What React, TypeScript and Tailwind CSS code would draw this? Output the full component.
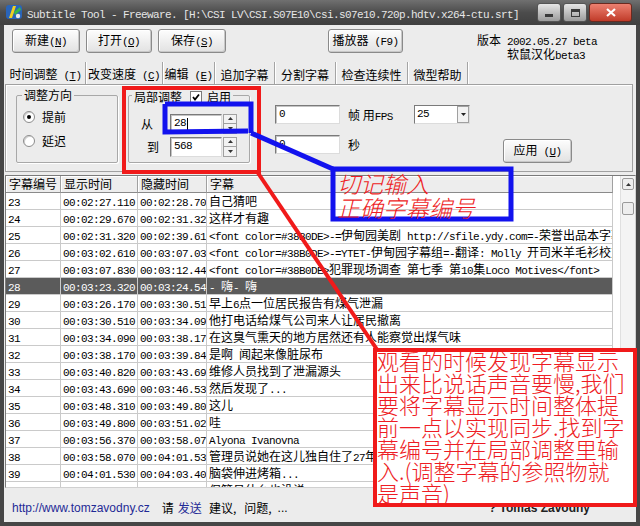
import React from "react";

const MONO = "font-['Liberation_Mono',monospace] text-[11px] tracking-[-0.6px]";

function Mixed({ text }: { text: string }) {
  const parts = text.split(/([\x00-\x7f]+)/).filter((p) => p.length > 0);
  return (
    <>
      {parts.map((p, i) =>
        /^[\x00-\x7f]+$/.test(p) ? (
          <span key={i} className="font-['Liberation_Mono',monospace] text-[11px] tracking-[-0.6px]">
            {p}
          </span>
        ) : (
          <span key={i}>{p}</span>
        )
      )}
    </>
  );
}

function Acc({ zh, k, sp }: { zh: string; k: string; sp?: boolean }) {
  return (
    <span className="whitespace-pre">
      <span>{zh}</span>
      <span className={MONO}>
        {sp ? " " : ""}(<u className="underline underline-offset-1">{k}</u>)
      </span>
    </span>
  );
}

function Btn({ className, children }: { className: string; children: React.ReactNode }) {
  return (
    <div
      className={`h-[24px] flex items-center justify-center shrink-0 border border-[#8a8a8a] rounded-[3px] bg-linear-to-b from-[#fdfdfd] to-[#e2e2e2] shadow-[inset_-1px_-1px_0_#c8c8c8,inset_1px_1px_0_#ffffff] leading-[16px] ${className}`}
    >
      {children}
    </div>
  );
}

function Radio({ checked }: { checked?: boolean }) {
  return (
    <span className="w-[12px] h-[12px] rounded-full border border-[#8c8c8c] bg-white flex items-center justify-center shrink-0 shadow-[inset_1px_1px_0_#d0d0d0]">
      {checked ? <span className="w-[4px] h-[4px] rounded-full bg-black" /> : null}
    </span>
  );
}

function Input({ className, children }: { className: string; children?: React.ReactNode }) {
  return (
    <div
      className={`bg-white border border-t-[#7a7a7a] border-l-[#7a7a7a] border-b-[#dcdcdc] border-r-[#dcdcdc] shadow-[inset_1px_1px_0_#c4c4c4] pl-[3px] flex items-center shrink-0 ${MONO} ${className}`}
    >
      {children}
    </div>
  );
}

function Spinner() {
  return (
    <div className="ml-[1px] w-[14px] h-[20px] flex flex-col shrink-0">
      <div className="h-[10px] border border-[#a0a0a0] bg-[#f2f2f2] flex items-center justify-center">
        <svg width="5" height="3" viewBox="0 0 5 3">
          <path d="M2.5 0 L5 3 L0 3 Z" fill="#333" />
        </svg>
      </div>
      <div className="h-[10px] border border-t-0 border-[#a0a0a0] bg-[#f2f2f2] flex items-center justify-center">
        <svg width="5" height="3" viewBox="0 0 5 3">
          <path d="M0 0 L5 0 L2.5 3 Z" fill="#333" />
        </svg>
      </div>
    </div>
  );
}

function TitleBar() {
  const title = "Subtitle Tool - Freeware. [H:\\CSI LV\\CSI.S07E10\\csi.s07e10.720p.hdtv.x264-ctu.srt]";
  return (
    <div className="h-[25px] shrink-0 flex items-start bg-linear-to-b from-[#707070] via-[#4c4c4c] to-[#404040] pl-[5px] pr-[8px]">
      <svg className="mt-[3px] shrink-0" width="18" height="18" viewBox="0 0 18 18">
        <rect x="1" y="2" width="16" height="14" rx="3" fill="#2a64b8" />
        <path d="M4 15 L8 3 L11 3 L7 15 Z" fill="#f0d020" />
        <path d="M9 9 L15 4 L16 7 L10 12 Z" fill="#38b848" />
        <circle cx="13" cy="13" r="2.2" fill="#e8e8e8" />
      </svg>
      <span className="ml-[4px] mt-[6px] leading-[18px] font-['Liberation_Mono',monospace] text-[11px] tracking-[-0.6px] text-[#e6e6e6] whitespace-pre">
        {title}
      </span>
      <div className="ml-auto mt-[3px] flex gap-[2px]">
        <div className="w-[24px] h-[19px] rounded-[3px] border border-[#555] bg-linear-to-b from-[#e6e6e6] to-[#9c9c9c] flex items-end justify-center pb-[4px]">
          <div className="w-[8px] h-[3px] bg-[#3a3a3a]" />
        </div>
        <div className="w-[24px] h-[19px] rounded-[3px] border border-[#555] bg-linear-to-b from-[#e6e6e6] to-[#9c9c9c] flex items-center justify-center">
          <div className="w-[9px] h-[8px] border border-[#3a3a3a] border-t-[3px]" />
        </div>
        <div className="w-[43px] h-[19px] rounded-[3px] border border-[#6a2a20] bg-linear-to-b from-[#ec8070] to-[#c03a28] flex items-center justify-center">
          <svg width="10" height="9" viewBox="0 0 10 9">
            <path d="M1 1 L9 8 M9 1 L1 8" stroke="#fff" strokeWidth="2.2" />
          </svg>
        </div>
      </div>
    </div>
  );
}

function Toolbar() {
  return (
    <div className="h-[37px] shrink-0 flex items-start pl-[8px] pt-[4px]">
      <Btn className="w-[68px]">
        <Acc zh="新建" k="N" />
      </Btn>
      <Btn className="w-[66px] ml-[6px]">
        <Acc zh="打开" k="O" />
      </Btn>
      <Btn className="w-[68px] ml-[6px]">
        <Acc zh="保存" k="S" />
      </Btn>
      <Btn className="w-[75px] ml-[102px]">
        <span className="whitespace-pre">
          播放器<span className={MONO}> (F9)</span>
        </span>
      </Btn>
      <div className="ml-[74px] mt-[5px] leading-[12px] whitespace-pre">
        <div>
          版本<span className={MONO}> 2002.05.27 beta</span>
        </div>
        <div className="pl-[30px]">
          软鼠汉化<span className={MONO}>beta3</span>
        </div>
      </div>
    </div>
  );
}

const tabs: { zh: string; k?: string; w: string }[] = [
  { zh: "时间调整", k: "T", w: "w-[80px]" },
  { zh: "改变速度", k: "C", w: "w-[77px]" },
  { zh: "编辑", k: "E", w: "w-[52px]" },
  { zh: "追加字幕", w: "w-[60px]" },
  { zh: "分割字幕", w: "w-[61px]" },
  { zh: "检查连续性", w: "w-[72px]" },
  { zh: "微型帮助", w: "w-[60px]" },
];

function Tabs() {
  return (
    <div className="h-[22px] shrink-0 flex pl-[2px]">
      {tabs.map((t) => (
        <div
          key={t.zh}
          className={`${t.w} h-full pt-[4px] flex items-center justify-center border-r border-[#a4a4a4] shadow-[1px_0_0_#ffffff]`}
        >
          {t.k ? <Acc zh={t.zh} k={t.k} sp /> : <span>{t.zh}</span>}
        </div>
      ))}
    </div>
  );
}

function Panel() {
  return (
    <div className="ml-[1px] w-[628px] h-[88px] shrink-0 border border-[#a0a0a0] shadow-[inset_1px_1px_0_#ffffff] flex items-start">
      <fieldset className="ml-[10px] mt-[3px] w-[102px] h-[75px] border border-[#a8a8a8] rounded-[2px] shadow-[1px_1px_0_#ffffff] shrink-0">
        <legend className="ml-[5px] px-[2px] leading-[14px]">调整方向</legend>
        <div className="mt-[7px] pl-[6px] h-[16px] flex items-center">
          <Radio checked />
          <span className="ml-[7px]">提前</span>
        </div>
        <div className="mt-[8px] pl-[6px] h-[16px] flex items-center">
          <Radio />
          <span className="ml-[7px]">延迟</span>
        </div>
      </fieldset>

      <fieldset className="ml-[10px] mt-[3px] w-[122px] h-[75px] border border-[#a8a8a8] rounded-[2px] shadow-[1px_1px_0_#ffffff] shrink-0">
        <legend className="ml-[3px] px-[2px] leading-[14px] whitespace-nowrap">
          <span className="align-middle">局部调整</span>
          <span className="inline-flex align-middle ml-[8px] w-[12px] h-[12px] border border-[#7a7a7a] bg-white items-center justify-center">
            <svg width="8" height="8" viewBox="0 0 8 8">
              <path d="M1 4 L3 6.5 L7 1.5" stroke="#000" strokeWidth="1.8" fill="none" />
            </svg>
          </span>
          <span className="align-middle ml-[5px]">启用</span>
        </legend>
        <div className="mt-[10px] h-[20px] flex items-center">
          <span className="ml-[12px] w-[29px] shrink-0">从</span>
          <Input className="w-[52px] h-[20px]">
            28<span className="w-[1px] h-[12px] bg-black ml-[1px]" />
          </Input>
          <Spinner />
        </div>
        <div className="mt-[3px] h-[20px] flex items-center">
          <span className="ml-[18px] w-[23px] shrink-0">到</span>
          <Input className="w-[52px] h-[20px]">568</Input>
          <Spinner />
        </div>
      </fieldset>

      <div className="ml-[25px] mt-[20px] flex flex-col">
        <div className="h-[19px] flex items-start">
          <Input className="w-[65px] h-[19px]">0</Input>
          <span className="w-[74px] pl-[8px] leading-[19px] whitespace-pre shrink-0">
            帧 用<span className={MONO}>FPS</span>
          </span>
          <div className="w-[56px] h-[19px] bg-white border border-t-[#7a7a7a] border-l-[#7a7a7a] border-b-[#dcdcdc] border-r-[#dcdcdc] flex items-stretch shrink-0">
            <span className={`flex-1 pl-[2px] leading-[17px] ${MONO}`}>25</span>
            <div className="w-[12px] border border-[#a0a0a0] bg-[#f2f2f2] flex items-center justify-center">
              <svg width="5" height="3" viewBox="0 0 5 3">
                <path d="M0 0 L5 0 L2.5 3 Z" fill="#222" />
              </svg>
            </div>
          </div>
        </div>
        <div className="mt-[11px] flex items-start">
          <Input className="w-[65px] h-[19px]">0</Input>
          <span className="w-[163px] pl-[8px] leading-[19px] shrink-0">秒</span>
          <Btn className="w-[69px] h-[23px] mt-[4px]">
            <Acc zh="应用" k="U" sp />
          </Btn>
        </div>
      </div>
    </div>
  );
}

const rows: [string, string, string, string][] = [
  ["23", "00:02:27.110", "00:02:28.70", "自己猜吧"],
  ["24", "00:02:29.670", "00:02:31.32", "这样才有趣"],
  ["25", "00:02:31.320", "00:02:39.61", "<font color=#38B0DE>-=伊甸园美剧 http://sfile.ydy.com=-荣誉出品本字幕仅供学习交流"],
  ["26", "00:03:02.610", "00:03:07.03", "<font color=#38B0DE>-=YTET-伊甸园字幕组=-翻译: Molly 开司米羊毛衫校对"],
  ["27", "00:03:07.830", "00:03:12.44", "<font color=#38B0DE>犯罪现场调查 第七季 第10集Loco Motives</font>"],
  ["28", "00:03:23.320", "00:03:24.54", "- 嗨- 嗨"],
  ["29", "00:03:26.170", "00:03:30.51", "早上6点一位居民报告有煤气泄漏"],
  ["30", "00:03:30.510", "00:03:34.09", "他打电话给煤气公司来人让居民撤离"],
  ["31", "00:03:34.090", "00:03:38.17", "在这臭气熏天的地方居然还有人能察觉出煤气味"],
  ["32", "00:03:38.170", "00:03:39.84", "是啊 闻起来像脏尿布"],
  ["33", "00:03:40.820", "00:03:43.69", "维修人员找到了泄漏源头"],
  ["34", "00:03:43.690", "00:03:46.53", "然后发现了..."],
  ["35", "00:03:48.310", "00:03:49.80", "这儿"],
  ["36", "00:03:49.800", "00:03:51.02", "哇"],
  ["37", "00:03:56.370", "00:03:58.07", "Alyona Ivanovna"],
  ["38", "00:03:58.070", "00:04:01.53", "管理员说她在这儿独自住了27年"],
  ["39", "00:04:01.530", "00:04:03.40", "脑袋伸进烤箱..."],
  ["40", "00:04:03.400", "00:04:05.10", "保管员什么也没说"],
];

function List() {
  const cell = "border-r border-b border-[#cacaca] pl-[2px] leading-[16px] overflow-hidden whitespace-pre shrink-0";
  const head = "h-[17px] border-r border-b border-r-[#a0a0a0] border-b-[#8a8a8a] bg-[#ededed] shadow-[inset_1px_1px_0_#ffffff] pl-[3px] leading-[16px] overflow-hidden whitespace-nowrap shrink-0";
  return (
    <div className="mt-[3px] ml-[1px] h-[313px] shrink-0 border border-t-[#7a7a7a] border-l-[#7a7a7a] border-b-[#d0d0d0] border-r-[#d0d0d0] bg-white flex overflow-hidden">
      <div className="w-[607px] shrink-0 flex flex-col">
        <div className="flex h-[17px] shrink-0">
          <div className={`w-[55px] ${head}`}>字幕编号</div>
          <div className={`w-[77px] ${head}`}>显示时间</div>
          <div className={`w-[69px] ${head}`}>隐藏时间</div>
          <div className={`w-[406px] ${head}`}>字幕</div>
        </div>
        {rows.map(([id, s, h, t]) => {
          const sel = id === "28";
          return (
            <div key={id} className={`flex h-[17px] shrink-0 ${sel ? "bg-[#5b5b5b] text-white" : "text-black"}`}>
              <div className={`w-[55px] ${cell}`}>
                <Mixed text={id} />
              </div>
              <div className={`w-[77px] ${cell}`}>
                <Mixed text={s} />
              </div>
              <div className={`w-[69px] ${cell}`}>
                <Mixed text={h} />
              </div>
              <div className={`w-[406px] ${cell}`}>
                <Mixed text={t} />
              </div>
            </div>
          );
        })}
      </div>
      <div className="w-[7px] shrink-0 bg-white" />
      <div className="w-[15px] shrink-0 bg-[#f4f4f4] border-l border-[#e0e0e0] flex flex-col items-center">
        <div className="mt-[2px] w-[12px] h-[12px] border border-[#9a9a9a] rounded-[2px] bg-[#eeeeee] flex items-center justify-center">
          <svg width="5" height="3" viewBox="0 0 5 3">
            <path d="M2.5 0 L5 3 L0 3 Z" fill="#333" />
          </svg>
        </div>
        <div className="mt-[12px] w-[12px] h-[13px] border border-[#9a9a9a] rounded-[2px] bg-[#eeeeee]" />
      </div>
    </div>
  );
}

function Status() {
  return (
    <div className="h-[34px] shrink-0 flex items-start pt-[12px] pl-[8px] leading-[16px] whitespace-pre">
      <span className="font-['Liberation_Sans',sans-serif] text-[12px] text-[#1f2a96]">http://www.tomzavodny.cz</span>
      <span className="ml-[12px]">请</span>
      <span className="ml-[4px] text-[#1f2a96]">发送</span>
      <span className="ml-[7px]">建议,</span>
      <span className="ml-[8px]">问题,</span>
      <span className="ml-[6px] font-['Liberation_Sans',sans-serif]">...</span>
      <span className="ml-auto mr-[46px] font-['Liberation_Sans',sans-serif] font-bold text-[12px] text-[#222]">? Tomas Zavodny</span>
    </div>
  );
}

function Overlay() {
  const red = "#f01a1a";
  const blue = "#1212ee";
  return (
    <>
      <svg className="absolute left-0 top-0 pointer-events-none" width="640" height="526" viewBox="0 0 640 526">
        <path d="M124 88 L259 88 L259 172 L124 172 Z" fill="none" stroke={red} strokeWidth="4" />
        <path d="M258 173 L378 351" fill="none" stroke={red} strokeWidth="4" />
        <rect x="375" y="350" width="260" height="155" fill="#ffffff" stroke={red} strokeWidth="4" />
        <path d="M165 104 L251 104 L251 133 M165 104 L165 132 L248 131" fill="none" stroke={blue} strokeWidth="5" />
        <path d="M251 133 L333 169" fill="none" stroke={blue} strokeWidth="5" />
        <rect x="333" y="169" width="178" height="50" fill="none" stroke={blue} strokeWidth="5" />
      </svg>
      <div className="absolute left-[337px] top-[171px] text-[23px] leading-[24px] italic font-light text-[#ee1c24] whitespace-nowrap">
        <div>切记输入</div>
        <div>正确字幕编号</div>
      </div>
      <div className="absolute left-[377px] top-[349px] text-[22px] leading-[22px] font-light text-[#ee1c24] whitespace-nowrap">
        <div>观看的时候发现字幕显示</div>
        <div>出来比说话声音要慢,我们</div>
        <div>要将字幕显示时间整体提</div>
        <div>前一点以实现同步.找到字</div>
        <div>幕编号并在局部调整里输</div>
        <div>入.(调整字幕的参照物就</div>
        <div>是声音)</div>
      </div>
    </>
  );
}

export default function App() {
  return (
    <div className="relative w-[640px] h-[526px] overflow-hidden bg-[#464646] font-['Noto_Sans_CJK_SC',sans-serif] text-[12px] text-black flex flex-col">
      <TitleBar />
      <div className="ml-[4px] w-[632px] h-[497px] shrink-0 bg-[#ececec] flex flex-col">
        <Toolbar />
        <Tabs />
        <Panel />
        <List />
        <Status />
      </div>
      <Overlay />
    </div>
  );
}
